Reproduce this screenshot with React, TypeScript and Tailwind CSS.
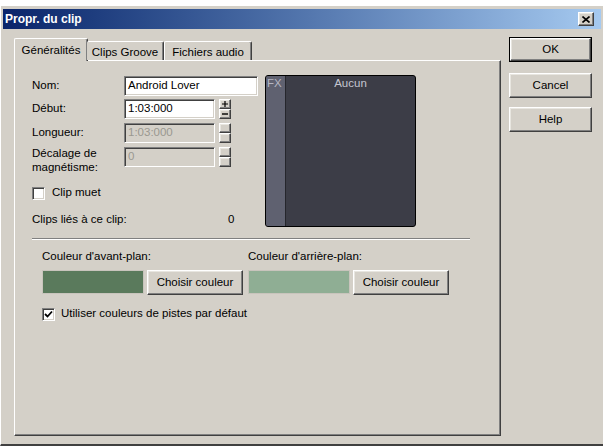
import React from "react";

const raised =
  "border border-t-white border-l-white border-b-[#404040] border-r-[#404040] shadow-[inset_-1px_-1px_0_#808080,inset_1px_1px_0_#e8e6e0]";
const sunken =
  "border border-t-[#808080] border-l-[#808080] border-b-white border-r-white shadow-[inset_1px_1px_0_#404040,inset_-1px_-1px_0_#d4d0c8]";

function Spinner({ enabled }: { enabled: boolean }) {
  return (
    <div className="flex flex-col w-[12px] h-[20px] ml-[4px]">
      <div className={`h-[10px] bg-[#d4d0c8] ${raised} flex items-center justify-center`}>
        {enabled && (
          <svg width="6" height="6" viewBox="0 0 6 6">
            <path d="M0 3h6M3 0v6" stroke="#000" strokeWidth="1.2" />
          </svg>
        )}
      </div>
      <div className={`h-[10px] bg-[#d4d0c8] ${raised} flex items-center justify-center`}>
        {enabled && (
          <svg width="6" height="6" viewBox="0 0 6 6">
            <path d="M0 3h6" stroke="#000" strokeWidth="1.4" />
          </svg>
        )}
      </div>
    </div>
  );
}

function Checkbox({ checked }: { checked: boolean }) {
  return (
    <div className={`w-[13px] h-[13px] bg-white ${sunken} flex items-center justify-center`}>
      {checked && (
        <svg width="9" height="9" viewBox="0 0 9 9">
          <path d="M1 4 L3.5 6.5 L8 1.5" stroke="#000" strokeWidth="1.8" fill="none" />
        </svg>
      )}
    </div>
  );
}

export default function App() {
  return (
    <div className="w-[603px] h-[446px] bg-white pt-[6px] font-['Liberation_Sans',Arial,sans-serif] text-[11.5px] text-black overflow-hidden">
      <div className="w-[603px] h-[440px] bg-[#d4d0c8] border-l border-l-white border-b-2 border-b-[#404040] px-[2px] pt-[3px] flex flex-col">
        {/* Title bar */}
        <div className="h-[20px] bg-linear-to-r from-[#0a246a] to-[#a6caf0] flex items-center pl-[2px] pr-[7px]">
          <span className="text-white font-bold text-[12px] leading-none">Propr. du clip</span>
          <div className="flex-1" />
          <div className={`w-[16px] h-[14px] bg-[#d4d0c8] ${raised} flex items-center justify-center`}>
            <svg width="8" height="7" viewBox="0 0 8 7">
              <path d="M0.5 0.5 L7.5 6.5 M7.5 0.5 L0.5 6.5" stroke="#000" strokeWidth="1.6" />
            </svg>
          </div>
        </div>

        {/* Body */}
        <div className="flex flex-1 pl-[11px] pt-[8px]">
          {/* Tab control */}
          <div className="w-[487px] flex flex-col mt-[1px]">
            <div className="h-[22px] flex items-end relative z-10 pl-[1px]">
              <div className="h-[23px] w-[74px] -ml-[1px] mb-[-1px] bg-[#d4d0c8] border-t border-l border-t-white border-l-white border-r border-r-[#404040] shadow-[inset_-1px_0_0_#808080] rounded-t-[2px] flex items-start justify-center pt-[3px]">
                Généralités
              </div>
              <div className="h-[19px] w-[77px] bg-[#d4d0c8] border-t border-t-white border-r border-r-[#404040] shadow-[inset_-1px_0_0_#808080] rounded-t-[2px] flex items-start justify-center pt-[2px] -ml-[1px]">
                Clips Groove
              </div>
              <div className="h-[19px] w-[88px] bg-[#d4d0c8] border-t border-l border-t-white border-l-white border-r border-r-[#404040] shadow-[inset_-1px_0_0_#808080] rounded-t-[2px] flex items-start justify-center pt-[2px]">
                Fichiers audio
              </div>
            </div>
            <div className="h-[376px] bg-[#d4d0c8] border border-t-white border-l-white border-b-[#404040] border-r-[#404040] shadow-[inset_-1px_-1px_0_#808080] pl-[17px] pt-[15px] flex flex-col">
              {/* Top section */}
              <div className="flex">
                <div className="w-[226px] flex flex-col">
                  <div className="flex items-center h-[20px]">
                    <span className="w-[92px]">Nom:</span>
                    <div className={`w-[134px] h-[20px] bg-white ${sunken} flex items-center pl-[3px]`}>Android Lover</div>
                  </div>
                  <div className="flex items-center h-[20px] mt-[3px]">
                    <span className="w-[92px]">Début:</span>
                    <div className={`w-[91px] h-[20px] bg-white ${sunken} flex items-center pl-[3px]`}>1:03:000</div>
                    <Spinner enabled />
                  </div>
                  <div className="flex items-center h-[20px] mt-[4px]">
                    <span className="w-[92px]">Longueur:</span>
                    <div className={`w-[91px] h-[20px] bg-[#d4d0c8] ${sunken} flex items-center pl-[3px] text-[#9a9890]`}>1:03:000</div>
                    <Spinner enabled={false} />
                  </div>
                  <div className="flex items-start mt-[4px]">
                    <span className="w-[92px] leading-[14px] -mt-[1px]">
                      Décalage de
                      <br />
                      magnétisme:
                    </span>
                    <div className={`w-[91px] h-[20px] bg-[#d4d0c8] ${sunken} flex items-center pl-[3px] text-[#9a9890]`}>0</div>
                    <Spinner enabled={false} />
                  </div>
                  <div className="flex items-center mt-[12px] h-[14px]">
                    <Checkbox checked={false} />
                    <span className="ml-[7px]">Clip muet</span>
                  </div>
                  <div className="flex items-center mt-[13px] h-[14px]">
                    <span className="w-[196px]">Clips liés à ce clip:</span>
                    <span>0</span>
                  </div>
                </div>
                <div className="ml-[7px] -mt-[1px] w-[151px] h-[152px] border border-black rounded-[3px] bg-[#3c3d47] flex overflow-hidden">
                  <div className="w-[20px] bg-[#5f6170] border-r border-r-[#25262c] text-[#b4b6c2] pl-[1px] pt-[1px] leading-[13px]">FX</div>
                  <div className="flex-1 text-center text-[#c4c6d0] pt-[1px] leading-[13px]">Aucun</div>
                </div>
              </div>

              {/* Separator */}
              <div className="w-[438px] h-[2px] mt-[11px] border-t border-t-[#808080] border-b border-b-white" />

              {/* Colors */}
              <div className="flex pl-[10px] mt-[9px]">
                <div className="w-[206px] flex flex-col">
                  <span className="leading-[14px]">Couleur d'avant-plan:</span>
                  <div className="flex mt-[7px]">
                    <div className="w-[102px] h-[24px] bg-[#5a7a5c] border border-[#c8c4bc]" />
                    <div className={`ml-[3px] w-[96px] h-[25px] bg-[#d4d0c8] ${raised} flex items-center justify-center`}>Choisir couleur</div>
                  </div>
                </div>
                <div className="w-[206px] flex flex-col">
                  <span className="leading-[14px]">Couleur d'arrière-plan:</span>
                  <div className="flex mt-[7px]">
                    <div className="w-[102px] h-[24px] bg-[#8fae94] border border-[#c8c4bc]" />
                    <div className={`ml-[3px] w-[96px] h-[25px] bg-[#d4d0c8] ${raised} flex items-center justify-center`}>Choisir couleur</div>
                  </div>
                </div>
              </div>

              <div className="flex items-center pl-[10px] mt-[12px] h-[14px]">
                <Checkbox checked />
                <span className="ml-[6px]">Utiliser couleurs de pistes par défaut</span>
              </div>
            </div>
          </div>

          {/* Buttons */}
          <div className="ml-[8px] flex flex-col w-[83px]">
            <div className="border border-black">
              <div className={`h-[23px] bg-[#d4d0c8] ${raised} flex items-center justify-center`}>OK</div>
            </div>
            <div className={`mt-[11px] h-[25px] bg-[#d4d0c8] ${raised} flex items-center justify-center`}>Cancel</div>
            <div className={`mt-[9px] h-[25px] bg-[#d4d0c8] ${raised} flex items-center justify-center`}>Help</div>
          </div>
        </div>
      </div>
    </div>
  );
}
